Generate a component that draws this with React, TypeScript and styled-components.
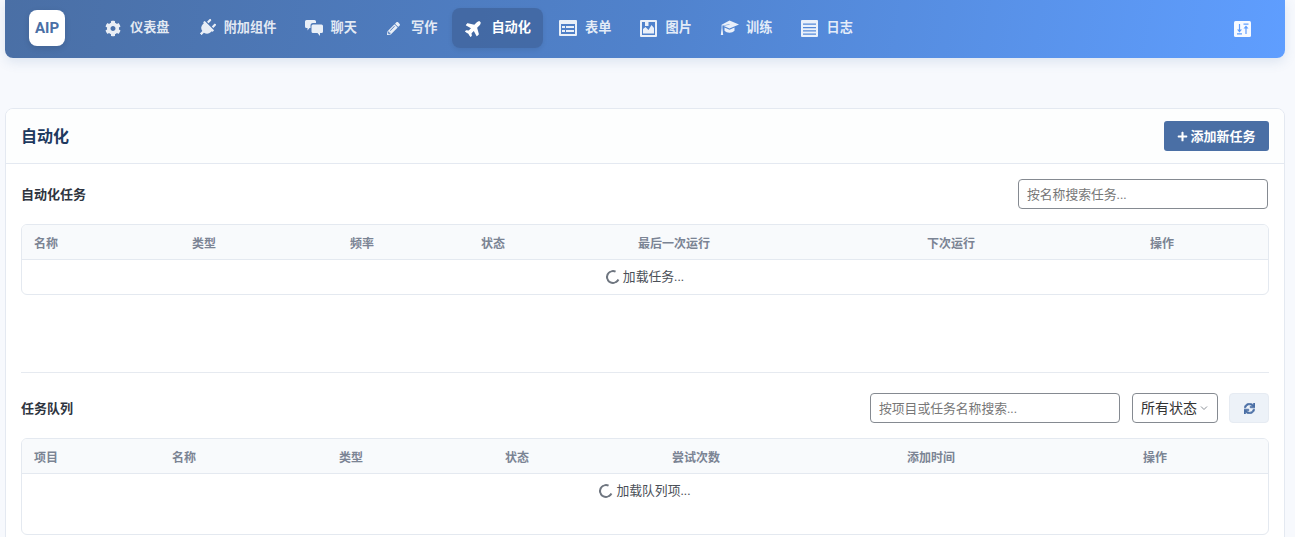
import React from "react";
import styled, { createGlobalStyle } from "styled-components";
import { FaCog, FaPlug, FaPencilAlt, FaPlane, FaSync, FaPlus } from "react-icons/fa";

const FONT = `Roboto, "Noto Sans CJK SC", "Noto Sans", sans-serif`;

const Global = createGlobalStyle`
  html, body { margin: 0; padding: 0; background: #f7f9fd; overflow: hidden; }
  body { font-family: ${FONT}; color: #333; line-height: 1.5; }
  * { box-sizing: border-box; }
`;

const Page = styled.div`
  width: 1295px;
  height: 537px;
  overflow: hidden;
  padding: 0 10px 0 5px;
`;

const Header = styled.header`
  height: 58px;
  display: flex;
  align-items: center;
  padding: 0 24px 2px;
  border-radius: 0 0 8px 8px;
  background: linear-gradient(100deg, #4a6fa5 0%, #5082cc 50%, #5f9eff 100%);
  box-shadow: 0 4px 12px rgba(74, 111, 165, 0.15);
`;

const Logo = styled.div`
  width: 36px;
  height: 36px;
  margin-right: 26px;
  background: #fff;
  border-radius: 8px;
  box-shadow: 0 2px 6px rgba(0, 0, 0, 0.12);
  display: flex;
  align-items: center;
  justify-content: center;
  color: #4a6fa5;
  font-size: 15px;
  font-weight: 700;
`;

const Nav = styled.nav`
  display: flex;
  gap: 3.6px;
  flex: 1;
`;

const NavItem = styled.a<{ $active?: boolean }>`
  height: 40px;
  display: flex;
  align-items: center;
  gap: 9px;
  padding: 0 11.5px 0 14px;
  border-radius: 8px;
  font-size: 13.2px;
  font-weight: 700;
  color: ${(p) => (p.$active ? "#fff" : "rgba(255,255,255,0.85)")};
  background: ${(p) => (p.$active ? "rgba(58,90,140,0.55)" : "transparent")};
  box-shadow: ${(p) => (p.$active ? "0 2px 5px rgba(0,0,0,0.08)" : "none")};
`;

const IconSlot = styled.span<{ $active?: boolean }>`
  width: 16px;
  height: 18px;
  display: flex;
  align-items: center;
  justify-content: center;
  flex: none;
  font-size: 17px;
  color: ${(p) => (p.$active ? "#fff" : "rgba(255,255,255,0.88)")};
`;

const PlugGlyph = styled(FaPlug)`
  flex: none;
  font-size: 18px;
  transform: rotate(45deg);
`;

const PlaneGlyph = styled(FaPlane)`
  flex: none;
  font-size: 18px;
  transform: rotate(-45deg);
`;

const PencilGlyph = styled(FaPencilAlt)`
  font-size: 13px;
`;

const Toggle = styled.div`
  width: 17px;
  height: 16px;
  margin: 2px 10px 0 0;
  display: flex;
`;

const Card = styled.section`
  margin-top: 50px;
  height: 460px;
  width: 1280px;
  background: #fff;
  border: 1px solid #e4e9f1;
  border-radius: 8px;
  overflow: hidden;
`;

const CardHeader = styled.div`
  height: 55px;
  display: flex;
  align-items: center;
  justify-content: space-between;
  padding: 0 15px;
  background: #fdfefe;
  border-bottom: 1px solid #e4e9f1;
`;

const CardTitle = styled.h1`
  margin: 0;
  padding-top: 2px;
  font-size: 16px;
  font-weight: 700;
  color: #1e3a5f;
`;

const PrimaryButton = styled.button`
  width: 105px;
  height: 30px;
  padding: 1px 0 0;
  border: 0;
  border-radius: 3px;
  background: #4a6fa5;
  color: #fff;
  font: 700 13px/1.5 ${FONT};
  display: flex;
  align-items: center;
  justify-content: center;
  gap: 2px;
  svg { font-size: 11px; }
`;

const CardBody = styled.div`
  padding: 15px 15px 0;
`;

const Section = styled.div`
  display: flex;
  flex-direction: column;
  gap: 15px;
`;

const SectionHead = styled.div<{ $inset?: number }>`
  height: 30px;
  display: flex;
  align-items: center;
  gap: 12px;
  padding-right: ${(p) => p.$inset ?? 0}px;
`;

const SectionTitle = styled.h2`
  margin: 0 auto 0 0;
  padding-top: 1px;
  font-size: 13px;
  font-weight: 700;
  color: #2f3540;
`;

const SearchInput = styled.input`
  width: 250px;
  height: 30px;
  padding: 0 8px;
  border: 1px solid #858a91;
  border-radius: 4px;
  background: #fff;
  font: 12.8px/1.5 ${FONT};
  color: #333;
  &::placeholder { color: #777; opacity: 1; }
`;

const Select = styled.div`
  width: 86px;
  height: 30px;
  padding: 0 0 0 8px;
  border: 1px solid #858a91;
  border-radius: 4px;
  display: flex;
  align-items: center;
  gap: 3px;
  font-size: 14px;
  color: #333;
`;

const RefreshButton = styled.button`
  width: 40px;
  height: 30px;
  margin-left: -1px;
  padding: 0;
  border: 1px solid #e6ebf2;
  border-radius: 4px;
  background: #edf2f8;
  color: #4a6fa5;
  display: flex;
  align-items: center;
  justify-content: center;
  font-size: 11px;
  svg { stroke: currentColor; stroke-width: 30; }
`;

const Table = styled.div`
  border: 1px solid #e4e9f0;
  border-radius: 6px;
  overflow: hidden;
`;

const HeadRow = styled.div<{ $cols: string }>`
  height: 35px;
  display: grid;
  grid-template-columns: ${(p) => p.$cols};
  align-items: center;
  background: #f8fafc;
  border-bottom: 1px solid #e4e9f0;
`;

const HeadCell = styled.div`
  padding-left: 12px;
  font-size: 12px;
  line-height: normal;
  font-weight: 700;
  color: #7b8494;
`;

const LoadingRow = styled.div<{ $height: number }>`
  height: ${(p) => p.$height}px;
  padding-top: 8px;
  display: flex;
  justify-content: center;
  align-items: flex-start;
  gap: 3px;
  font-size: 12.8px;
  line-height: 17px;
  color: #4a4f57;
`;

const Spinner = styled.span`
  width: 14px;
  height: 14px;
  margin-top: 2px;
  border-radius: 50%;
  border: 2px solid #6f7680;
  border-right-color: transparent;
  transform: rotate(-20deg);
`;

const Divider = styled.hr`
  margin: 77px 0 20px;
  border: 0;
  border-top: 1px solid #e6eaf0;
`;

const CommentsIcon = () => (
  <svg width="18" height="16" viewBox="0 0 18 16" style={{ flex: "none" }}>
    <path fill="#fff" fillOpacity=".88" d="M1.500 0h8A1.500 1.500 0 0 1 11 1.500V3H8a2.500 2.500 0 0 0-2.500 2.500V8H4.500L2.500 10.500V8H1.500A1.500 1.500 0 0 1 0 6.500v-5A1.500 1.500 0 0 1 1.500 0z" />
    <path fill="#fff" fillOpacity=".88" d="M8 4.500h8.500A1.500 1.500 0 0 1 18 6v5.500a1.500 1.500 0 0 1-1.500 1.500H15v3l-2.500-3H8a1.500 1.500 0 0 1-1.500-1.500V6A1.500 1.500 0 0 1 8 4.500z" />
  </svg>
);

const CapIcon = () => (
  <svg width="19" height="16" viewBox="0 0 19 16" style={{ flex: "none" }}>
    <path fill="#fff" fillOpacity=".88" d="M9.500 0.500L19 4.500 9.500 8.500 3.200 5.800 9.500 4.800V4.200L2.400 5.400V8l.8 7H.8l.8-7V4.800z" />
    <path fill="#fff" fillOpacity=".88" d="M4.500 7.500l5 2.200 5-2.200v3.300c-1.200 1.200-3 1.900-5 1.900s-3.800-.7-5-1.900z" />
  </svg>
);

const FormIcon = () => (
  <svg width="18" height="16" viewBox="0 0 18 16" style={{ flex: "none" }}>
    <path fill="#fff" fillOpacity=".88" fillRule="evenodd" d="M1 0h16a1 1 0 0 1 1 1v14a1 1 0 0 1-1 1H1a1 1 0 0 1-1-1V1a1 1 0 0 1 1-1zM2 4v10h14V4zM3 6h3v2H3zM7 6h8v2H7zM3 10h3v2H3zM7 10h8v2H7z" />
  </svg>
);

const ImageIcon = () => (
  <svg width="17" height="17" viewBox="0 0 17 17" style={{ flex: "none" }}>
    <path fill="#fff" fillOpacity=".88" fillRule="evenodd" d="M1 0h15a1 1 0 0 1 1 1v15a1 1 0 0 1-1 1H1a1 1 0 0 1-1-1V1a1 1 0 0 1 1-1zM2 2v13h13V2zM3 13.500V9l2.500-2 3 3 3-5 2.500 3v5.500zM5 2h3.500v4H5z" />
  </svg>
);

const LogIcon = () => (
  <svg width="17" height="17" viewBox="0 0 17 17" style={{ flex: "none" }}>
    <path fill="#fff" fillOpacity=".88" fillRule="evenodd" d="M1 0h15a1 1 0 0 1 1 1v15a1 1 0 0 1-1 1H1a1 1 0 0 1-1-1V1a1 1 0 0 1 1-1zM2 3.500v1.200h13V3.500zM2 7v1.200h13V7zM2 10.300v1.200h13v-1.200zM2 13.500v1.200h13v-1.200z" />
  </svg>
);

const SortIcon = () => (
  <svg width="17" height="16" viewBox="0 0 17 16">
    <rect width="17" height="16" rx="1.500" fill="#fff" fillOpacity=".95" />
    <path stroke="#5f9eff" strokeWidth="1.200" fill="none" d="M5.500 3v6M3 12.800h5M9.500 3.200h5M12 7v6" />
    <path fill="#5f9eff" d="M3 8.500h5L5.500 11.500zM9.500 7.500h5L12 4.500z" />
  </svg>
);

const Chevron = () => (
  <svg width="8" height="8" viewBox="0 0 8 8">
    <path d="M1 2.500l3 3 3-3" fill="none" stroke="#8a8f96" strokeWidth="1" />
  </svg>
);

const navItems: { label: string; icon: React.ReactNode; active?: boolean }[] = [
  { label: "仪表盘", icon: <FaCog /> },
  { label: "附加组件", icon: <PlugGlyph /> },
  { label: "聊天", icon: <CommentsIcon /> },
  { label: "写作", icon: <PencilGlyph /> },
  { label: "自动化", icon: <PlaneGlyph />, active: true },
  { label: "表单", icon: <FormIcon /> },
  { label: "图片", icon: <ImageIcon /> },
  { label: "训练", icon: <CapIcon /> },
  { label: "日志", icon: <LogIcon /> },
];

const taskCols = "158px 158px 131px 157px 289px 223px 1fr";
const queueCols = "138px 167px 166px 167px 235px 236px 1fr";
const taskHeads = ["名称", "类型", "频率", "状态", "最后一次运行", "下次运行", "操作"];
const queueHeads = ["项目", "名称", "类型", "状态", "尝试次数", "添加时间", "操作"];

export default function App() {
  return (
    <Page>
      <Global />
      <Header>
        <Logo>AIP</Logo>
        <Nav>
          {navItems.map((item) => (
            <NavItem key={item.label} $active={item.active}>
              <IconSlot $active={item.active}>{item.icon}</IconSlot>
              {item.label}
            </NavItem>
          ))}
        </Nav>
        <Toggle><SortIcon /></Toggle>
      </Header>
      <Card>
        <CardHeader>
          <CardTitle>自动化</CardTitle>
          <PrimaryButton><FaPlus />添加新任务</PrimaryButton>
        </CardHeader>
        <CardBody>
          <Section>
            <SectionHead $inset={1}>
              <SectionTitle>自动化任务</SectionTitle>
              <SearchInput placeholder="按名称搜索任务..." />
            </SectionHead>
            <Table>
              <HeadRow $cols={taskCols}>
                {taskHeads.map((h) => <HeadCell key={h}>{h}</HeadCell>)}
              </HeadRow>
              <LoadingRow $height={34}><Spinner />加载任务...</LoadingRow>
            </Table>
          </Section>
          <Divider />
          <Section>
            <SectionHead>
              <SectionTitle>任务队列</SectionTitle>
              <SearchInput placeholder="按项目或任务名称搜索..." />
              <Select>所有状态<Chevron /></Select>
              <RefreshButton><FaSync /></RefreshButton>
            </SectionHead>
            <Table>
              <HeadRow $cols={queueCols}>
                {queueHeads.map((h) => <HeadCell key={h}>{h}</HeadCell>)}
              </HeadRow>
              <LoadingRow $height={60}><Spinner />加载队列项...</LoadingRow>
            </Table>
          </Section>
        </CardBody>
      </Card>
    </Page>
  );
}
